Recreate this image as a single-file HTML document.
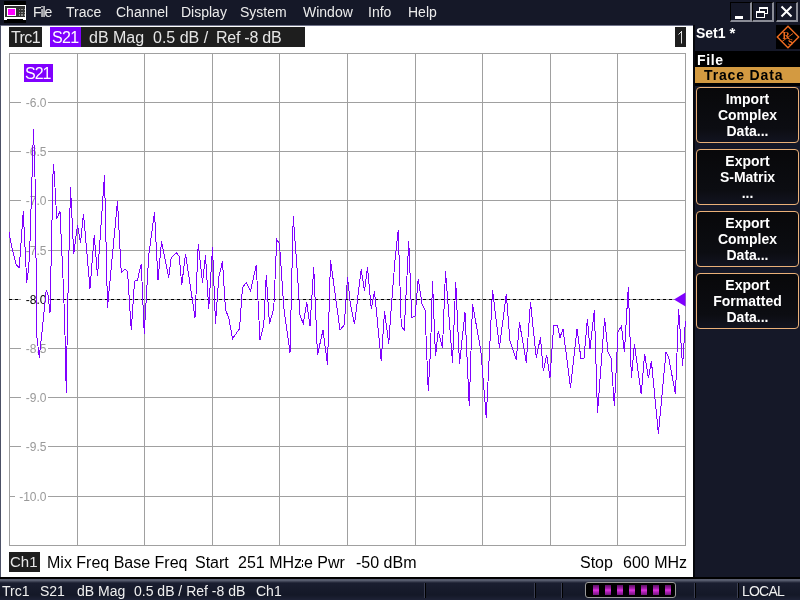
<!DOCTYPE html>
<html><head><meta charset="utf-8">
<style>
*{margin:0;padding:0;box-sizing:border-box}
html,body{width:800px;height:600px;overflow:hidden;background:#151828;font-family:"Liberation Sans",sans-serif}
.a{position:absolute;white-space:nowrap;will-change:transform}
#menu{left:0;top:0;width:800px;height:26px;background:#151828}
.mi{will-change:transform;position:absolute;top:4px;font-size:14px;line-height:16px;color:#ececec}
#chart{left:1px;top:26px;width:692px;height:551px;background:#fff;overflow:hidden}
#vsep{left:693px;top:25px;width:2px;height:552px;background:#05060c}
.hb{will-change:transform;position:absolute;background:#1e1e1e;color:#e6e6e6;font-size:16px;line-height:20px;height:20px}
#rp{left:695px;top:26px;width:105px;height:551px;background:#151828}
.btn{will-change:transform;position:absolute;left:696px;width:103px;height:56px;border:1px solid #eab078;border-radius:4px;background:linear-gradient(#08080a,#0c0d12 75%,#121420);color:#fff;font-weight:bold;font-size:14px;line-height:16px;text-align:center;padding-top:3px}
#status{left:0;top:577px;width:800px;height:23px;background:linear-gradient(#000 0,#000 2px,#5a5e70 2px,#555a6c 3.5px,#1a1e30 6px,#141827 18px,#1e2236 23px)}
.st{will-change:transform;position:absolute;top:6px;font-size:14px;line-height:16px;color:#f0f0f0}
.sep{position:absolute;top:6px;width:1px;height:15px;background:#000;box-shadow:-1px 0 0 #3a3e52}
.bl{will-change:transform;position:absolute;font-size:16px;line-height:18px;color:#000}
.yl{will-change:transform;position:absolute;font-size:12px;line-height:14px;color:#999;background:#fff;padding:0 2px}
</style></head><body>
<div id="menu" class="a">
  <svg class="a" style="left:4px;top:1px" width="22" height="22" viewBox="0 0 22 22" shape-rendering="crispEdges">
    <rect x="0" y="0" width="22" height="22" fill="#000"/>
    <rect x="0" y="4" width="22" height="14" fill="#fff"/>
    <rect x="1" y="5" width="20" height="11" fill="#333"/>
    <rect x="3" y="7" width="9" height="8" fill="#fff"/>
    <rect x="4" y="8" width="7" height="6" fill="#ff00ff"/>
    <g fill="#8a8a8a"><rect x="15" y="8" width="1" height="1"/><rect x="17" y="8" width="2" height="1"/><rect x="20" y="8" width="1" height="1"/><rect x="15" y="11" width="1" height="1"/><rect x="17" y="11" width="2" height="1"/><rect x="20" y="11" width="1" height="1"/><rect x="15" y="13" width="1" height="2"/><rect x="17" y="13" width="2" height="2"/><rect x="20" y="13" width="1" height="2"/></g>
    <rect x="0" y="18" width="3" height="1" fill="#fff"/><rect x="19" y="18" width="3" height="1" fill="#fff"/>
  </svg>
  <span class="mi" style="left:33px;letter-spacing:-1.1px">File</span>
  <span class="mi" style="left:66px">Trace</span>
  <span class="mi" style="left:116px">Channel</span>
  <span class="mi" style="left:181px">Display</span>
  <span class="mi" style="left:240px">System</span>
  <span class="mi" style="left:303px">Window</span>
  <span class="mi" style="left:368px">Info</span>
  <span class="mi" style="left:408px">Help</span>
  <!-- window buttons -->
  <div class="a" style="left:730px;top:2px;width:22px;height:20px;background:#151828;border-top:1px solid #000;border-left:1px solid #000;border-right:2px solid #8a8c96;border-bottom:2px solid #8a8c96"></div>
  <div class="a" style="left:735px;top:16px;width:8px;height:3px;background:#fff"></div>
  <div class="a" style="left:752px;top:2px;width:22px;height:20px;background:#151828;border-top:1px solid #000;border-left:1px solid #000;border-right:2px solid #8a8c96;border-bottom:2px solid #8a8c96"></div>
  <div class="a" style="left:759px;top:7px;width:9px;height:7px;border:1px solid #fff;border-top-width:2px"></div>
  <div class="a" style="left:756px;top:11px;width:9px;height:7px;border:1px solid #fff;border-top-width:2px;background:#151828"></div>
  <div class="a" style="left:776px;top:2px;width:22px;height:20px;background:#151828;border-top:1px solid #000;border-left:1px solid #000;border-right:2px solid #8a8c96;border-bottom:2px solid #8a8c96"></div>
  <svg class="a" style="left:780px;top:5px" width="13" height="13" viewBox="0 0 13 13"><path d="M1.5 1.5L11.5 11.5M11.5 1.5L1.5 11.5" stroke="#fff" stroke-width="2"/></svg>
</div>
<div id="chart" class="a">
  <svg class="a" style="left:-1px;top:-26px" width="800" height="600" viewBox="0 0 800 600">
    <g stroke="#a0a0a0" stroke-width="1" shape-rendering="crispEdges" fill="none">
      <line x1="9.5" y1="53" x2="9.5" y2="546"/>
<line x1="77.5" y1="53" x2="77.5" y2="546"/>
<line x1="144.5" y1="53" x2="144.5" y2="546"/>
<line x1="212.5" y1="53" x2="212.5" y2="546"/>
<line x1="279.5" y1="53" x2="279.5" y2="546"/>
<line x1="347.5" y1="53" x2="347.5" y2="546"/>
<line x1="415.5" y1="53" x2="415.5" y2="546"/>
<line x1="482.5" y1="53" x2="482.5" y2="546"/>
<line x1="550.5" y1="53" x2="550.5" y2="546"/>
<line x1="617.5" y1="53" x2="617.5" y2="546"/>
<line x1="685.5" y1="53" x2="685.5" y2="546"/>
<line x1="9" y1="53.5" x2="686" y2="53.5"/>
<line x1="9" y1="102.5" x2="686" y2="102.5"/>
<line x1="9" y1="151.5" x2="686" y2="151.5"/>
<line x1="9" y1="200.5" x2="686" y2="200.5"/>
<line x1="9" y1="250.5" x2="686" y2="250.5"/>
<line x1="9" y1="299.5" x2="686" y2="299.5"/>
<line x1="9" y1="348.5" x2="686" y2="348.5"/>
<line x1="9" y1="397.5" x2="686" y2="397.5"/>
<line x1="9" y1="446.5" x2="686" y2="446.5"/>
<line x1="9" y1="496.5" x2="686" y2="496.5"/>
<line x1="9" y1="545.5" x2="686" y2="545.5"/>
    </g>
    <line x1="9" y1="299.5" x2="685" y2="299.5" stroke="#000" stroke-width="1" stroke-dasharray="3 3" shape-rendering="crispEdges"/>
    <rect x="21" y="98" width="27" height="9" fill="#fff"/>
<text x="46.5" y="107" text-anchor="end" font-size="12" fill="#999" font-family="Liberation Sans">-6.0</text>
<rect x="21" y="147" width="27" height="9" fill="#fff"/>
<text x="46.5" y="156" text-anchor="end" font-size="12" fill="#999" font-family="Liberation Sans">-6.5</text>
<rect x="21" y="196" width="27" height="9" fill="#fff"/>
<text x="46.5" y="205" text-anchor="end" font-size="12" fill="#999" font-family="Liberation Sans">-7.0</text>
<rect x="21" y="246" width="27" height="9" fill="#fff"/>
<text x="46.5" y="255" text-anchor="end" font-size="12" fill="#999" font-family="Liberation Sans">-7.5</text>
<rect x="21" y="295" width="27" height="9" fill="#fff"/>
<text x="46.5" y="304" text-anchor="end" font-size="12" fill="#000" font-family="Liberation Sans">-8.0</text>
<rect x="21" y="344" width="27" height="9" fill="#fff"/>
<text x="46.5" y="353" text-anchor="end" font-size="12" fill="#999" font-family="Liberation Sans">-8.5</text>
<rect x="21" y="393" width="27" height="9" fill="#fff"/>
<text x="46.5" y="402" text-anchor="end" font-size="12" fill="#999" font-family="Liberation Sans">-9.0</text>
<rect x="21" y="442" width="27" height="9" fill="#fff"/>
<text x="46.5" y="451" text-anchor="end" font-size="12" fill="#999" font-family="Liberation Sans">-9.5</text>
<rect x="15" y="492" width="33" height="9" fill="#fff"/>
<text x="46.5" y="501" text-anchor="end" font-size="12" fill="#999" font-family="Liberation Sans">-10.0</text>
    <polyline points="9.00,232.50 12.50,250.00 16.25,265.00 19.25,267.50 23.25,211.25 26.75,282.50 28.75,267.50 30.00,241.00 32.00,177.00 33.50,129.00 35.00,177.00 37.00,337.50 39.25,357.50 42.50,327.50 46.25,290.00 48.00,295.00 50.00,312.50 53.25,163.75 54.25,173.75 56.75,218.75 60.00,211.25 63.75,295.00 65.00,335.00 66.25,392.50 67.50,315.00 70.50,187.50 73.75,253.75 77.50,225.00 80.50,242.50 83.50,213.75 90.00,288.75 94.25,235.00 97.50,276.25 104.50,175.00 107.50,307.50 117.50,201.25 121.25,272.50 125.00,268.75 127.50,271.25 131.25,330.00 134.50,281.25 137.50,280.00 141.25,263.75 144.25,333.75 148.75,255.00 154.50,212.50 158.00,280.00 161.50,241.25 168.75,277.50 171.25,257.50 176.25,252.50 179.25,256.25 181.75,285.00 185.50,253.75 195.00,317.50 198.25,243.75 202.50,282.50 205.50,255.00 208.75,308.75 212.50,247.50 215.50,323.75 218.75,277.50 222.50,261.25 225.50,310.00 228.75,317.50 232.50,338.75 239.50,328.75 242.50,287.50 246.25,282.50 250.50,291.25 256.25,265.00 260.00,340.00 263.75,325.00 266.25,275.00 269.50,323.75 273.75,308.75 276.75,239.50 279.50,243.75 283.75,307.50 290.00,352.50 293.25,216.25 297.50,275.00 300.00,315.00 303.25,323.75 306.75,302.50 310.00,326.25 313.75,267.50 317.50,355.00 323.00,330.00 327.50,365.00 330.50,260.00 340.00,330.00 344.25,325.00 347.50,277.50 350.50,305.00 354.50,323.75 361.25,269.50 364.50,291.25 367.50,267.50 371.25,308.75 374.50,291.25 381.25,361.25 384.50,311.25 388.75,343.75 391.25,307.50 395.00,260.00 398.25,230.00 401.25,326.25 404.25,330.00 408.75,241.25 411.75,317.50 415.00,316.25 418.25,278.75 422.00,303.75 425.00,310.00 428.25,391.25 430.50,350.00 432.50,281.25 435.50,356.25 438.25,331.25 442.50,347.50 445.50,271.25 452.50,362.50 455.75,282.50 459.50,363.75 465.00,312.50 469.25,406.25 472.50,303.75 480.75,350.00 486.25,417.50 492.50,290.00 499.50,347.50 506.25,293.75 510.00,341.25 516.25,360.00 519.50,322.50 526.25,362.50 530.50,302.50 536.25,357.50 540.50,337.50 543.25,371.25 546.75,355.00 550.00,377.50 553.75,325.00 557.50,325.00 560.00,337.50 563.00,328.75 570.50,387.50 577.00,328.75 581.00,359.00 584.00,358.00 587.40,319.00 590.00,349.00 594.40,310.00 597.50,413.00 604.60,318.00 608.00,352.00 611.00,358.00 614.40,406.00 618.00,332.00 621.40,326.00 624.40,352.00 628.30,287.00 631.40,378.00 634.40,344.00 641.25,394.40 644.60,354.00 648.40,378.00 651.40,361.00 658.40,433.75 666.00,352.00 668.60,357.00 675.50,394.40 678.60,309.00 682.60,366.00 685.40,321.00" fill="none" stroke="#8000ff" stroke-width="1" shape-rendering="crispEdges"/>
    <polygon points="674,299.5 685.5,292.5 685.5,306.5" fill="#8000ff"/>
  </svg>
  <!-- header -->
  <div class="hb" style="left:8px;top:1px;width:33px;padding-left:2px;line-height:22px;letter-spacing:-0.6px">Trc1</div>
  <div class="hb" style="left:49px;top:1px;width:31px;background:#8000ff;color:#fff;padding-left:2px;line-height:22px;letter-spacing:-0.7px">S21</div>
  <div class="hb" style="left:80px;top:1px;width:224px"></div>
  <span class="a" style="left:88px;top:2px;font-size:16px;line-height:20px;color:#e6e6e6">dB Mag</span>
  <span class="a" style="left:152px;top:2px;font-size:16px;line-height:20px;color:#e6e6e6">0.5 dB /</span>
  <span class="a" style="left:215px;top:2px;font-size:16px;line-height:20px;color:#e6e6e6;letter-spacing:-0.25px">Ref -8 dB</span>
  <div class="hb" style="left:674px;top:1px;width:11px"></div><svg class="a" style="left:674px;top:1px" width="11" height="20"><path d="M6.5 4L6.5 16.5M3.5 7.5L6.5 4.5" stroke="#e0e0e0" stroke-width="1" fill="none"/></svg>
  <div class="a" style="left:23px;top:38px;width:29px;height:18px;background:#8000ff;color:#fff;font-size:16px;line-height:20px;padding-left:1px;letter-spacing:-1px">S21</div>
  <!-- bottom line -->
  <div class="hb" style="left:8px;top:526px;width:31px;padding-left:1px;font-size:15px">Ch1</div>
  <span class="bl" style="left:46px;top:528px">Mix Freq Base Freq</span>
  <span class="bl" style="left:194px;top:528px">Start</span>
  <span class="bl" style="left:237px;top:528px">251 MHz</span>
  <div class="a" style="left:301px;top:534px;width:1px;height:2px;background:#000"></div><div class="a" style="left:301px;top:538px;width:1px;height:3px;background:#000"></div>
  <span class="bl" style="left:302.5px;top:528px">e Pwr</span>
  <span class="bl" style="left:355px;top:528px">-50 dBm</span>
  <span class="bl" style="left:579px;top:528px">Stop</span>
  <span class="bl" style="left:622px;top:528px">600 MHz</span>
</div>
<div id="vsep" class="a"></div>
<div class="a" style="left:1px;top:25px;width:692px;height:1px;background:#70738a"></div>
<div class="a" style="left:0;top:25px;width:1px;height:552px;background:#4c5066"></div>
<div id="rp" class="a">
</div>
<span class="a" style="left:696px;top:25px;font-size:14px;line-height:16px;font-weight:bold;color:#fff">Set1 <span style="font-size:15px;letter-spacing:0">*</span></span>
<svg class="a" style="left:776px;top:25px" width="24" height="24" viewBox="0 0 24 24">
  <rect width="24" height="24" fill="#000"/>
  <path d="M12 1.3L22.7 12L12 22.7L1.3 12Z" fill="none" stroke="#f06c20" stroke-width="1.4"/>
  <text x="6.5" y="13.5" font-family="Liberation Serif" font-size="10" font-weight="bold" fill="#f06c20">R</text>
  <text x="12" y="19.5" font-family="Liberation Serif" font-size="9" font-weight="bold" fill="#f06c20">S</text>
  <path d="M6 16.5L17 8.5" stroke="#f06c20" stroke-width="0.9"/>
</svg>
<div class="a" style="left:695px;top:51px;width:105px;height:36px;background:#000"></div>
<span class="a" style="left:697px;top:52px;font-size:14px;line-height:16px;font-weight:bold;color:#fff;letter-spacing:0.6px">File</span>
<div class="a" style="left:695px;top:67px;width:105px;height:16px;background:#d39a41"></div>
<span class="a" style="left:704px;top:67px;font-size:14px;line-height:16px;font-weight:bold;color:#000;letter-spacing:0.85px">Trace Data</span>
<div class="a" style="left:695px;top:86px;width:105px;height:1px;background:#151828"></div>
<div class="btn" style="top:87px">Import<br>Complex<br>Data...</div>
<div class="btn" style="top:149px">Export<br>S-Matrix<br>...</div>
<div class="btn" style="top:211px">Export<br>Complex<br>Data...</div>
<div class="btn" style="top:273px">Export<br>Formatted<br>Data...</div>
<div id="status" class="a">
  <span class="st" style="left:2px">Trc1</span>
  <span class="st" style="left:40px">S21</span>
  <span class="st" style="left:77px">dB Mag</span>
  <span class="st" style="left:134px">0.5 dB / Ref -8 dB</span>
  <span class="st" style="left:256px">Ch1</span>
  <div class="sep" style="left:425px"></div>
  <div class="sep" style="left:535px"></div>
  <div class="sep" style="left:562px"></div>
  <div class="a" style="left:585px;top:5px;width:91px;height:16px;border:1px solid #9a9a9a;border-radius:3px;background:#000"></div>
  <div class="a" style="left:593px;top:8px;width:6px;height:10px;background:linear-gradient(#5a1060,#b020b8 40%,#e038e0 50%,#b020b8 70%,#701878)"></div><div class="a" style="left:605px;top:8px;width:6px;height:10px;background:linear-gradient(#5a1060,#b020b8 40%,#e038e0 50%,#b020b8 70%,#701878)"></div><div class="a" style="left:617px;top:8px;width:6px;height:10px;background:linear-gradient(#5a1060,#b020b8 40%,#e038e0 50%,#b020b8 70%,#701878)"></div><div class="a" style="left:629px;top:8px;width:6px;height:10px;background:linear-gradient(#5a1060,#b020b8 40%,#e038e0 50%,#b020b8 70%,#701878)"></div><div class="a" style="left:641px;top:8px;width:6px;height:10px;background:linear-gradient(#5a1060,#b020b8 40%,#e038e0 50%,#b020b8 70%,#701878)"></div><div class="a" style="left:653px;top:8px;width:6px;height:10px;background:linear-gradient(#5a1060,#b020b8 40%,#e038e0 50%,#b020b8 70%,#701878)"></div><div class="a" style="left:665px;top:8px;width:6px;height:10px;background:linear-gradient(#5a1060,#b020b8 40%,#e038e0 50%,#b020b8 70%,#701878)"></div>
  <div class="sep" style="left:695px"></div>
  <div class="sep" style="left:738px"></div>
  <span class="st" style="left:742px;letter-spacing:-0.8px">LOCAL</span>
</div>
</body></html>
